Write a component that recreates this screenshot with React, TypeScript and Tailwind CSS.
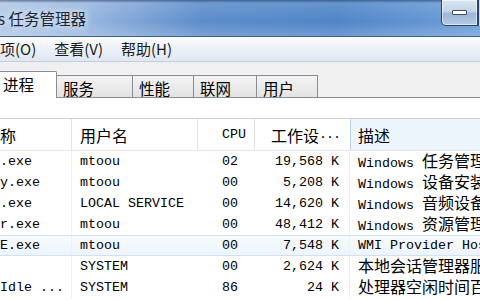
const rows = [
  { name: "taskmgr.exe", user: "mtoou", cpu: "02", mem: "19,568 K", desc: "Windows 任务管理器" },
  { name: "DrvQuery.exe", user: "mtoou", cpu: "00", mem: "5,208 K", desc: "Windows 设备安装程序" },
  { name: "audiodg.exe", user: "LOCAL SERVICE", cpu: "00", mem: "14,620 K", desc: "Windows 音频设备图形隔离" },
  { name: "explorer.exe", user: "mtoou", cpu: "00", mem: "48,412 K", desc: "Windows 资源管理器" },
  { name: "WmiPrvSE.exe", user: "mtoou", cpu: "00", mem: "7,548 K", desc: "WMI Provider Host", hot: true },
  { name: "smss", user: "SYSTEM", cpu: "00", mem: "2,624 K", desc: "本地会话管理器服务" },
  { name: "System Idle ...", user: "SYSTEM", cpu: "86", mem: "24 K", desc: "处理器空闲时间百分比" },
]

// ASCII in mono, CJK runs a bit bigger like SimSun
function Mixed({ text }: { text: string }) {
  return (
    <span className="whitespace-pre">
      {text.split(/([\u3400-\u9fff]+)/).map((s, i) =>
        /[\u3400-\u9fff]/.test(s) ? (
          <span key={i} className="font-['Noto_Sans_CJK_SC',sans-serif] text-[16px]">
            {s}
          </span>
        ) : (
          <span key={i}>{s}</span>
        )
      )}
    </span>
  )
}

const ui = "font-['Noto_Sans_CJK_SC','Noto_Sans',sans-serif]"
const mono = "font-['Liberation_Mono','Noto_Sans_CJK_SC',monospace] text-[13.33px]"

export default function App() {
  return (
    <div className="w-[480px] h-[300px] overflow-hidden bg-white flex flex-col text-black">
      {/* Title bar */}
      <div className="h-[37px] flex items-start border-b border-[#3f5f8c] bg-[linear-gradient(180deg,rgba(40,60,95,0.55)_0px,rgba(255,255,255,0.12)_3px,rgba(255,255,255,0)_60%,rgba(255,255,255,0.18)_100%),linear-gradient(90deg,#b0c7e5_0%,#98b6df_18%,#5c8dcb_42%,#4f85c7_70%,#6f9fd9_100%)]">
        <div className={`${ui} ml-[-61px] mt-[7px] text-[15.5px] text-[#1b2433] whitespace-nowrap [text-shadow:0_0_6px_#e8f0fa,0_0_10px_#e8f0fa]`}>
          Windows 任务管理器
        </div>
        <div className="ml-auto flex">
          <div className="w-[37px] h-[26px] rounded-bl-[5px] border border-t-0 border-[#2f4466] bg-[linear-gradient(180deg,#dce6f3_0%,#c3d3e9_45%,#9db6d8_55%,#b6cbe6_100%)] flex items-center justify-center shadow-[inset_0_0_0_1px_rgba(255,255,255,0.55)]">
            <div className="w-[15px] h-[5px] bg-white border border-[#3d4c63] rounded-[1px]" />
          </div>
          <div className="w-[2px] h-[26px] border-l border-[#2f4466] bg-[#c9d8ec]" />
        </div>
      </div>

      {/* Menu bar */}
      <div className={`${ui} h-[25px] flex items-center gap-[18px] text-[15px] text-[#1a1a1a] bg-gradient-to-b from-[#fbfcfe] to-[#dfe7f2] border-b border-[#c7ced8]`}>
        <span className="ml-[-15px]">选项(O)</span>
        <span>查看(V)</span>
        <span>帮助(H)</span>
      </div>

      {/* Tabs */}
      <div className={`${ui} h-[36px] flex items-end bg-[#f0f0f0] text-[15.5px]`}>
        <div className="w-[57px] h-[27px] bg-white border-t border-r border-[#898c95] rounded-tr-[2px] pl-[3px] pt-[3px] leading-[18px]">
          进程
        </div>
        {[
          ["服务", "w-[76px]"],
          ["性能", "w-[61px]"],
          ["联网", "w-[63px]"],
          ["用户", "w-[61px]"],
        ].map(([t, w]) => (
          <div
            key={t}
            className={`${w} h-[23px] border-t border-r border-b border-[#898c95] bg-gradient-to-b from-[#f3f3f3] to-[#e3e3e3] pl-[6px] pt-[3px] leading-[18px]`}
          >
            {t}
          </div>
        ))}
        <div className="flex-1 border-b border-[#898c95]" />
      </div>

      <div className="h-[20px] bg-white" />

      {/* List view */}
      <div className="flex-1 flex flex-col border-t border-[#d0d0d0]">
        <div className="h-[32px] flex items-stretch border-b border-[#e5e5e5] text-[16px] leading-none">
          <div className={`${ui} w-[72px] border-r border-[#e3e3e3] flex items-center whitespace-nowrap overflow-hidden`}>
            <span className="ml-[-16px]">名称</span>
          </div>
          <div className={`${ui} w-[126px] border-r border-[#e3e3e3] flex items-center pl-[8px]`}>用户名</div>
          <div className={`${mono} w-[57px] border-r border-[#e3e3e3] flex items-center pl-[24px]`}>CPU</div>
          <div className="w-[95px] flex items-center justify-end pr-[10px] whitespace-nowrap">
            <span className={ui}>工作设</span>
            <span className={`${mono} tracking-[-1px]`}>...</span>
          </div>
          <div className={`${ui} flex-1 flex items-center pl-[7px] bg-[#ecf4fc] border-l border-[#bcd4ec]`}>描述</div>
        </div>

        {rows.map((r) => (
          <div
            key={r.name}
            className={`${mono} h-[21px] leading-none flex items-stretch whitespace-nowrap ${
              r.hot ? "bg-gradient-to-b from-[#f8fbfe] to-[#edf4fc] border-y border-[#cfe1f5]" : ""
            }`}
          >
            <div className="w-[72px] border-r border-[#f0f0f0] flex items-center overflow-hidden">
              <span className="ml-[-56px]">{r.name}</span>
            </div>
            <div className="w-[126px] flex items-center pl-[8px]">{r.user}</div>
            <div className="w-[57px] flex items-center pl-[24px]">{r.cpu}</div>
            <div className="w-[95px] flex items-center justify-end pr-[10px] border-r border-[#f0f0f0]">{r.mem}</div>
            <div className="flex-1 flex items-center pl-[8px] overflow-hidden">
              <Mixed text={r.desc} />
            </div>
          </div>
        ))}
      </div>
    </div>
  )
}
